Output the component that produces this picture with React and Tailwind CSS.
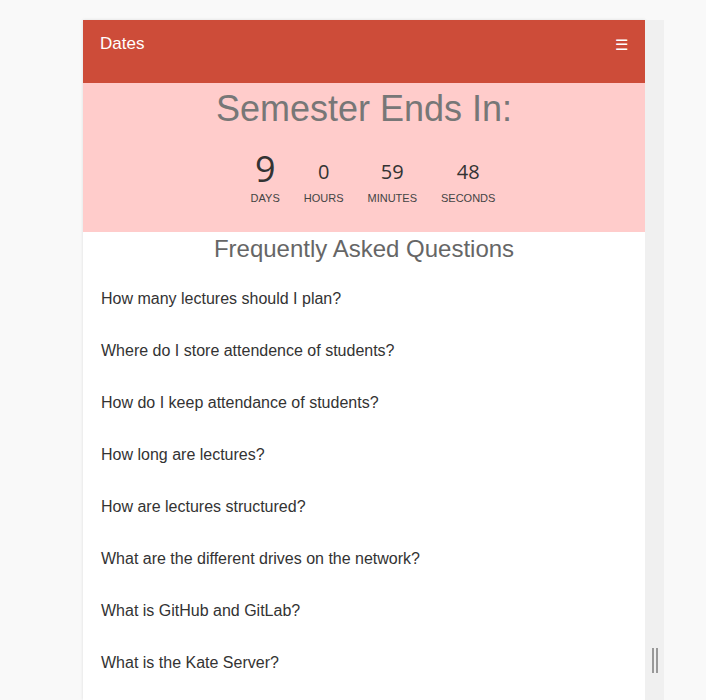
import React from 'react';

const questions = [
  "How many lectures should I plan?",
  "Where do I store attendence of students?",
  "How do I keep attendance of students?",
  "How long are lectures?",
  "How are lectures structured?",
  "What are the different drives on the network?",
  "What is GitHub and GitLab?",
  "What is the Kate Server?",
];

const countdown = [
  { value: "9", label: "Days", big: true },
  { value: "0", label: "Hours" },
  { value: "59", label: "Minutes" },
  { value: "48", label: "Seconds" },
];

function App() {
  return (
    <div className="h-[700px] overflow-hidden bg-[#f9f9f9] pt-[20px] pl-[83px] font-['Liberation_Sans',Arial,sans-serif]">
      <div className="flex h-full">
        {/* Main card */}
        <div className="w-[562px] bg-white shadow-[0_0_3px_rgba(0,0,0,0.12)]">
          {/* Header */}
          <div className="h-[63px] bg-[#cd4c39] flex items-start justify-between pl-[17px] pr-[17px] pt-[14px] text-white">
            <span className="text-[17px] leading-[20px]">Dates</span>
            <span className="text-[15px] leading-[20px] pt-[1px]">☰</span>
          </div>

          {/* Countdown */}
          <div className="h-[149px] bg-[#ffcccb] flex flex-col items-center">
            <h1 className="text-[36px] leading-[48px] text-[#777] mt-[2px]">Semester Ends In:</h1>
            <div className="flex items-end mt-[16px] pl-[18px] font-['Open_Sans',sans-serif] text-[#333]">
              {countdown.map((c) => (
                <div key={c.label} className="flex flex-col items-center px-[12px]">
                  <span className={c.big ? "text-[36px] leading-[40px]" : "text-[20px] leading-[28px] mb-[3px]"}>
                    {c.value}
                  </span>
                  <span className="text-[11px] leading-[14px] uppercase font-['Liberation_Sans',Arial,sans-serif] text-[#444] mt-[2px]">
                    {c.label}
                  </span>
                </div>
              ))}
            </div>
          </div>

          {/* FAQ */}
          <div>
            <h2 className="text-center text-[24px] leading-[34px] text-[#666] mb-[7px]">
              Frequently Asked Questions
            </h2>
            {questions.map((q) => (
              <div key={q} className="h-[52px] flex items-center pl-[18px] text-[16px] text-[#333]">
                {q}
              </div>
            ))}
          </div>
        </div>

        {/* Side strip with resize handle */}
        <div className="w-[19px] bg-[#f0f0f0] flex items-start justify-center pt-[628px]">
          <div className="flex gap-[2px]">
            <div className="w-[2px] h-[25px] bg-[#999]"></div>
            <div className="w-[2px] h-[25px] bg-[#999]"></div>
          </div>
        </div>
      </div>
    </div>
  );
}

export default App;
